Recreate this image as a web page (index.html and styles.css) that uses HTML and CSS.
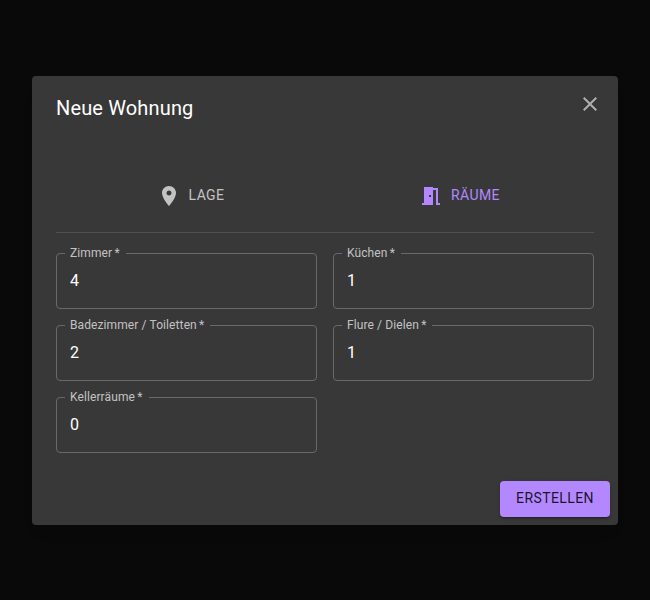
FILE: index.html
```html
<!DOCTYPE html>
<html lang="de">
<head>
<meta charset="utf-8">
<title>Neue Wohnung</title>
<link rel="stylesheet" href="styles.css">
</head>
<body>
<main class="dialog">
  <header class="header">
    <h2 class="title">Neue Wohnung</h2>
    <button class="close" aria-label="Schließen"><svg viewBox="0 0 24 24"><path d="M19 6.41 17.59 5 12 10.59 6.41 5 5 6.41 10.59 12 5 17.59 6.41 19 12 13.41 17.59 19 19 17.59 13.41 12z"/></svg></button>
  </header>
  <nav class="tabs">
    <button class="tab"><svg viewBox="0 0 24 24"><path d="M12 2C8.13 2 5 5.13 5 9c0 5.25 7 13 7 13s7-7.75 7-13c0-3.87-3.13-7-7-7zm0 9.5c-1.38 0-2.5-1.12-2.5-2.5s1.12-2.5 2.5-2.5 2.5 1.12 2.5 2.5-1.12 2.5-2.5 2.5z"/></svg><span>LAGE</span></button>
    <button class="tab active"><svg viewBox="0 0 24 24"><path d="M14 6v15H3v-2h2V3h9v1h5v15h2v2h-4V6h-3zm-4 5v2h2v-2h-2z"/></svg><span>RÄUME</span></button>
  </nav>
  <form class="fields">
    <fieldset class="field"><legend>Zimmer<span class="required"> *</span></legend><span class="value">4</span></fieldset>
    <fieldset class="field"><legend>Küchen<span class="required"> *</span></legend><span class="value">1</span></fieldset>
    <fieldset class="field"><legend>Badezimmer / Toiletten<span class="required"> *</span></legend><span class="value">2</span></fieldset>
    <fieldset class="field"><legend>Flure / Dielen<span class="required"> *</span></legend><span class="value">1</span></fieldset>
    <fieldset class="field"><legend>Kellerräume<span class="required"> *</span></legend><span class="value">0</span></fieldset>
  </form>
  <footer class="actions"><button class="submit">ERSTELLEN</button></footer>
</main>
</body>
</html>
```
FILE: styles.css
```css
* { box-sizing: border-box; }
body {
  margin: 0;
  height: 600px;
  display: flex;
  align-items: center;
  justify-content: center;
  background: #090909;
  color: #fff;
  font-family: Roboto, sans-serif;
}
button { border: 0; padding: 0; background: none; font-family: inherit; }
svg { width: 24px; height: 24px; fill: currentColor; display: block; }
.dialog {
  width: 586px;
  height: 449px;
  margin-top: 1px;
  display: flex;
  flex-direction: column;
  background: #383838;
  border-radius: 4px;
  box-shadow: 0 11px 15px -7px rgba(0,0,0,.1);
}
.header { display: flex; justify-content: space-between; padding: 16px 16px 0 24px; height: 84px; }
.title { margin: 0; font-size: 20px; line-height: 32px; font-weight: 400; letter-spacing: .15px; }
.close { height: 24px; color: #afafaf; }
.tabs {
  display: grid;
  grid-template-columns: 1fr 1fr;
  height: 73px;
  margin: 0 24px;
  border-bottom: 1px solid #505050;
}
.tab {
  display: flex;
  align-items: center;
  justify-content: center;
  gap: 8px;
  color: #c3c3c3;
  font-size: 14px;
  font-weight: 400;
  letter-spacing: .4px;
}
.tab span { padding-bottom: 2px; }
.tab.active { color: #b388ff; }
.fields { display: grid; grid-template-columns: 1fr 1fr; gap: 10px 16px; padding: 14px 24px 0; }
.field {
  min-width: 0;
  height: 62px;
  margin: 0;
  padding: 0 8px;
  border: 1px solid #696969;
  border-radius: 4px;
}
.field legend { padding: 0 6px 0 5px; font-size: 12px; line-height: 12px; color: #c3c3c3; letter-spacing: .1px; }
.required { word-spacing: -.8px; }
.value { display: block; padding: 10px 5px 0; font-size: 16px; line-height: 24px; letter-spacing: .15px; }
.actions { margin-top: auto; padding: 8px; display: flex; justify-content: flex-end; }
.submit {
  height: 36px;
  width: 110px;
  padding-bottom: 2px;
  background: #b388ff;
  color: rgba(0,0,0,.87);
  border-radius: 4px;
  font-size: 14px;
  font-weight: 400;
  letter-spacing: .4px;
  box-shadow: 0 3px 1px -2px rgba(0,0,0,.2), 0 2px 2px rgba(0,0,0,.14), 0 1px 5px rgba(0,0,0,.12);
}
```
